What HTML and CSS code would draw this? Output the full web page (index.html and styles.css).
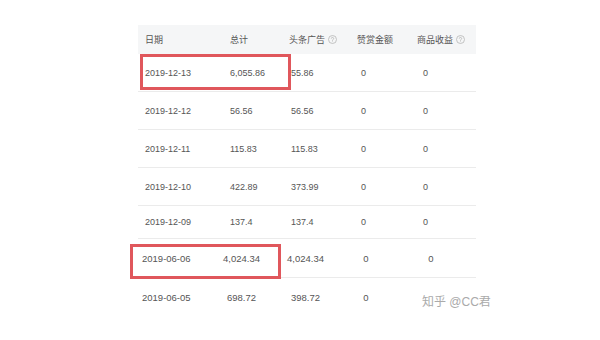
FILE: index.html
```html
<!DOCTYPE html>
<html lang="zh-CN">
<head>
<meta charset="utf-8">
<title>收益明细</title>
<link rel="stylesheet" href="styles.css">
</head>
<body>
<div class="page">
  <div class="sheet">
    <div class="tbl top">
      <div class="row head">
        <div class="c">日期</div>
        <div class="c">总计</div>
        <div class="c">头条广告<svg class="help" viewBox="0 0 9 9" width="9" height="9"><circle cx="4.5" cy="4.5" r="4" fill="none" stroke="#b5b5b5" stroke-width="0.8"/><path d="M3.3 3.6a1.2 1.2 0 1 1 1.8 1c-.4.2-.6.5-.6.9v.3" fill="none" stroke="#b5b5b5" stroke-width="0.8"/><circle cx="4.5" cy="6.8" r="0.45" fill="#b5b5b5"/></svg></div>
        <div class="c">赞赏金额</div>
        <div class="c">商品收益<svg class="help" viewBox="0 0 9 9" width="9" height="9"><circle cx="4.5" cy="4.5" r="4" fill="none" stroke="#b5b5b5" stroke-width="0.8"/><path d="M3.3 3.6a1.2 1.2 0 1 1 1.8 1c-.4.2-.6.5-.6.9v.3" fill="none" stroke="#b5b5b5" stroke-width="0.8"/><circle cx="4.5" cy="6.8" r="0.45" fill="#b5b5b5"/></svg></div>
      </div>
      <div class="row">
        <div class="c">2019-12-13</div><div class="c">6,055.86</div><div class="c z3">55.86</div><div class="c z4">0</div><div class="c z5">0</div>
      </div>
      <div class="row">
        <div class="c">2019-12-12</div><div class="c">56.56</div><div class="c z3">56.56</div><div class="c z4">0</div><div class="c z5">0</div>
      </div>
      <div class="row">
        <div class="c">2019-12-11</div><div class="c">115.83</div><div class="c z3">115.83</div><div class="c z4">0</div><div class="c z5">0</div>
      </div>
      <div class="row">
        <div class="c">2019-12-10</div><div class="c">422.89</div><div class="c z3">373.99</div><div class="c z4">0</div><div class="c z5">0</div>
      </div>
      <div class="row cut">
        <div class="c">2019-12-09</div><div class="c">137.4</div><div class="c z3">137.4</div><div class="c z4">0</div><div class="c z5">0</div>
      </div>
    </div>
    <div class="tbl snip">
      <div class="row">
        <div class="c">2019-06-06</div><div class="c">4,024.34</div><div class="c">4,024.34</div><div class="c">0</div><div class="c">0</div>
      </div>
      <div class="row last">
        <div class="c">2019-06-05</div><div class="c">698.72</div><div class="c">398.72</div><div class="c">0</div><div class="c"></div>
      </div>
    </div>
    <div class="mark mark-top"></div>
    <div class="mark mark-bottom"></div>
    <div class="wm">知乎 @CC君</div>
  </div>
</div>
</body>
</html>
```
FILE: styles.css
```css
html, body {
  margin: 0;
  padding: 0;
  background: #ffffff;
}

body {
  font-family: "Liberation Sans", "Noto Sans CJK SC", sans-serif;
  color: #555555;
  width: 600px;
  height: 340px;
  overflow: hidden;
}

.page {
  padding: 25px 0 0 138px;
}

.sheet {
  position: relative;
  width: 338px;
}

.row {
  display: grid;
  align-items: center;
  height: 38px;
  border-bottom: 1px solid #ebebeb;
  box-sizing: border-box;
}

.top .row {
  grid-template-columns: 85px 59px 68px 60px 66px;
  font-size: 9px;
}

.top .c {
  padding-left: 7px;
  white-space: nowrap;
  display: flex;
  align-items: center;
}

.top .head {
  height: 29px;
  background: #f5f6f7;
  border-bottom: none;
  color: #555555;
}

.top .cut {
  height: 33px;
}

.top .z3 {
  padding-left: 9px;
}

.top .z4 {
  padding-left: 11px;
}

.top .z5 {
  padding-left: 13px;
}

.help {
  margin-left: 3px;
  flex: none;
}

.snip {
  border-top: 1px solid #ebebeb;
  margin-top: -1px;
}

.snip .row {
  grid-template-columns: 80px 47px 81px 40px 90px;
  font-size: 9.5px;
  height: 39px;
}

.snip .row.last {
  border-bottom: none;
}

.snip .c {
  text-align: center;
  white-space: nowrap;
}

.snip .c:first-child {
  text-align: left;
  padding-left: 4px;
}

.mark {
  position: absolute;
  border: 3px solid #e0575c;
  box-sizing: border-box;
}

.mark-top {
  left: 2px;
  top: 29px;
  width: 151px;
  height: 36px;
}

.mark-bottom {
  left: -8px;
  top: 219px;
  width: 151px;
  height: 35px;
}

.wm {
  position: absolute;
  left: 284px;
  top: 267px;
  font-size: 12px;
  color: #aaaaaa;
  white-space: nowrap;
}
```
